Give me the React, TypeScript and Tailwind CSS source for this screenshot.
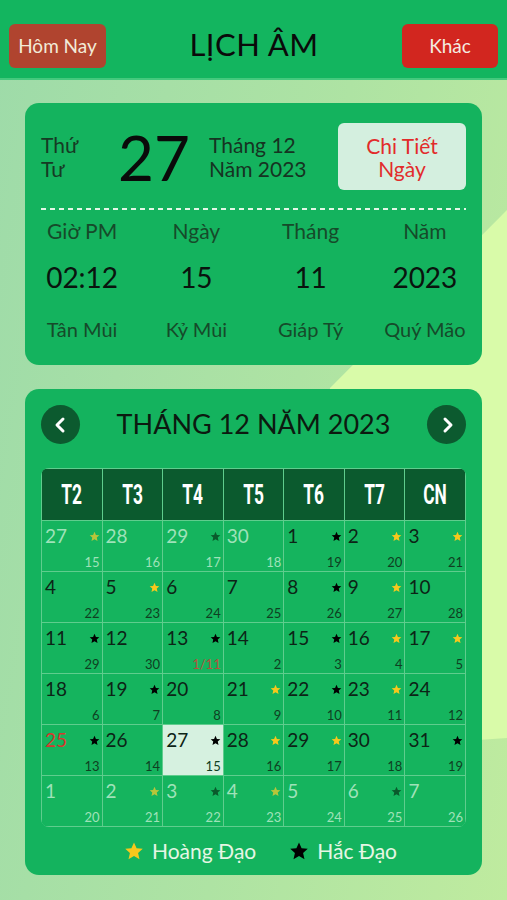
import React from 'react';
import { ChevronLeft, ChevronRight } from 'lucide-react';

type StarKind = 'y' | 'b' | null;

interface DayCell {
  day: number;
  lunar: string;
  star: StarKind;
  other?: boolean;
  red?: boolean;
  today?: boolean;
  lunarRed?: boolean;
}

const weekdays = ['T2', 'T3', 'T4', 'T5', 'T6', 'T7', 'CN'];

// tuần lịch tháng 12/2023
const weeks: DayCell[][] = [
  [
    { day: 27, lunar: '15', star: 'y', other: true },
    { day: 28, lunar: '16', star: null, other: true },
    { day: 29, lunar: '17', star: 'b', other: true },
    { day: 30, lunar: '18', star: null, other: true },
    { day: 1, lunar: '19', star: 'b' },
    { day: 2, lunar: '20', star: 'y' },
    { day: 3, lunar: '21', star: 'y' },
  ],
  [
    { day: 4, lunar: '22', star: null },
    { day: 5, lunar: '23', star: 'y' },
    { day: 6, lunar: '24', star: null },
    { day: 7, lunar: '25', star: null },
    { day: 8, lunar: '26', star: 'b' },
    { day: 9, lunar: '27', star: 'y' },
    { day: 10, lunar: '28', star: null },
  ],
  [
    { day: 11, lunar: '29', star: 'b' },
    { day: 12, lunar: '30', star: null },
    { day: 13, lunar: '1/11', star: 'b', lunarRed: true },
    { day: 14, lunar: '2', star: null },
    { day: 15, lunar: '3', star: 'b' },
    { day: 16, lunar: '4', star: 'y' },
    { day: 17, lunar: '5', star: 'y' },
  ],
  [
    { day: 18, lunar: '6', star: null },
    { day: 19, lunar: '7', star: 'b' },
    { day: 20, lunar: '8', star: null },
    { day: 21, lunar: '9', star: 'y' },
    { day: 22, lunar: '10', star: 'b' },
    { day: 23, lunar: '11', star: 'y' },
    { day: 24, lunar: '12', star: null },
  ],
  [
    { day: 25, lunar: '13', star: 'b', red: true },
    { day: 26, lunar: '14', star: null },
    { day: 27, lunar: '15', star: 'b', today: true },
    { day: 28, lunar: '16', star: 'y' },
    { day: 29, lunar: '17', star: 'y' },
    { day: 30, lunar: '18', star: null },
    { day: 31, lunar: '19', star: 'b' },
  ],
  [
    { day: 1, lunar: '20', star: null, other: true },
    { day: 2, lunar: '21', star: 'y', other: true },
    { day: 3, lunar: '22', star: 'b', other: true },
    { day: 4, lunar: '23', star: 'y', other: true },
    { day: 5, lunar: '24', star: null, other: true },
    { day: 6, lunar: '25', star: 'b', other: true },
    { day: 7, lunar: '26', star: null, other: true },
  ],
];

const StarIcon = ({ size, className }: { size: number; className?: string }) => (
  <svg width={size} height={size} viewBox="0 0 24 24" className={className}>
    <path
      d="M12 1.8l3.1 6.9 7.4.7-5.6 5 1.7 7.4L12 17.9l-6.6 3.9 1.7-7.4-5.6-5 7.4-.7z"
      fill="currentColor"
    />
  </svg>
);

const Cell = ({ cell }: { cell: DayCell }) => {
  let numColor = 'text-[#0c2416]';
  let lunarColor = 'text-[#0f3f22]';
  let starColor = cell.star === 'y' ? 'text-[#f7c81c]' : 'text-black';
  if (cell.other) {
    numColor = 'text-[#9fe2b9]';
    lunarColor = 'text-[#9fe2b9]';
    starColor = cell.star === 'y' ? 'text-[#b8c53a]' : 'text-[#0a5a2c]';
  }
  if (cell.red) numColor = 'text-[#d4382d]';
  if (cell.lunarRed) lunarColor = 'text-[#b5503c]';

  return (
    <div
      className={`h-[50px] flex flex-col justify-between pl-[3px] pr-[2px] pt-[5px] pb-[1px] ${
        cell.today ? 'bg-[#d6f1e0]' : 'bg-[#15b45e]'
      }`}
    >
      <div className="flex items-center justify-between">
        <span className={`text-[19px] leading-[20px] ${numColor}`}>{cell.day}</span>
        {cell.star && <StarIcon size={11} className={starColor} />}
      </div>
      <div className={`text-right text-[13px] leading-[16px] ${lunarColor}`}>{cell.lunar}</div>
    </div>
  );
};

const App: React.FC = () => {
  const info = [
    { label: 'Giờ PM', value: '02:12', canchi: 'Tân Mùi' },
    { label: 'Ngày', value: '15', canchi: 'Kỷ Mùi' },
    { label: 'Tháng', value: '11', canchi: 'Giáp Tý' },
    { label: 'Năm', value: '2023', canchi: 'Quý Mão' },
  ];

  return (
    <div className="relative min-h-[900px] w-full overflow-hidden font-['Lato','Noto_Sans',sans-serif] bg-[linear-gradient(100deg,#9edba9_0%,#aee3a3_55%,#bfeb9f_100%)]">
      {/* mảng sáng phía sau */}
      <div className="absolute inset-0 bg-[#d9fba9] [clip-path:polygon(507px_210px,330px_388px,330px_748px,420px_744px,507px_738px)]" />

      {/* Header */}
      <div className="relative h-[80px] bg-[#13b55f] border-b-2 border-[#45c97d] flex items-center justify-between px-[9px] pt-[14px]">
        <button className="w-[97px] h-[44px] rounded-md bg-[#b0442f] text-[#f2ead8] text-[19px]">
          Hôm Nay
        </button>
        <h1 className="text-[31px] text-[#0a0a0a] tracking-[0.5px] -mt-[3px]">LỊCH ÂM</h1>
        <button className="w-[96px] h-[44px] rounded-md bg-[#d2261f] text-[#f4ece0] text-[19px]">
          Khác
        </button>
      </div>

      <div className="relative px-[25px] pt-[23px] flex flex-col gap-[24px]">
        {/* Thông tin ngày */}
        <div className="h-[262px] rounded-[14px] bg-[#14b35e] pt-[20px] flex flex-col">
          <div className="flex items-center px-[16px] h-[67px]">
            <div className="w-[77px] text-[21px] leading-[24px] text-[#163a24]">
              <div>Thứ</div>
              <div>Tư</div>
            </div>
            <div className="w-[91px] text-[62px] leading-[62px] text-[#0a0a0a]">27</div>
            <div className="flex-1 text-[21px] leading-[24px] text-[#163322]">
              <div>Tháng 12</div>
              <div>Năm 2023</div>
            </div>
            <button className="w-[128px] h-[67px] rounded-md bg-[#d4efdf] text-[#e22b2b] text-[21px] leading-[23px]">
              Chi Tiết
              <br />
              Ngày
            </button>
          </div>

          <div className="mx-[16px] mt-[18px] h-[2px] bg-[repeating-linear-gradient(90deg,#e3f6e6_0px,#e3f6e6_5px,transparent_5px,transparent_9px)]" />

          <div className="grid grid-cols-4 mt-[9px]">
            {info.map(item => (
              <div key={item.label} className="flex flex-col items-center">
                <div className="text-[21px] leading-[24px] text-[#164a2a]">{item.label}</div>
                <div className="mt-[16px] text-[28px] leading-[36px] text-[#0a140e]">{item.value}</div>
                <div className="mt-[22px] text-[20px] leading-[24px] text-[#164a2a]">{item.canchi}</div>
              </div>
            ))}
          </div>
        </div>

        {/* Lịch tháng */}
        <div className="h-[486px] rounded-[14px] bg-[#14b35e] px-[16px] pt-[16px]">
          <div className="flex items-center justify-between h-[39px]">
            <button className="w-[39px] h-[39px] rounded-full bg-[#0c5a2f] flex items-center justify-center">
              <ChevronLeft size={24} strokeWidth={3} className="text-white -ml-[2px]" />
            </button>
            <div className="text-[27px] text-[#0c1a10]">THÁNG 12 NĂM 2023</div>
            <button className="w-[39px] h-[39px] rounded-full bg-[#0c5a2f] flex items-center justify-center">
              <ChevronRight size={24} strokeWidth={3} className="text-white ml-[2px]" />
            </button>
          </div>

          <div className="mt-[24px] grid grid-cols-7 gap-px p-px bg-[#5fcd8d] rounded-[8px] overflow-hidden">
            {weekdays.map(w => (
              <div key={w} className="h-[51px] bg-[#0b5a2e] flex items-center justify-center">
                <span className="inline-block scale-x-[0.62] font-['Roboto',sans-serif] font-bold text-[28px] text-white">
                  {w}
                </span>
              </div>
            ))}
            {weeks.map((week, wi) =>
              week.map((cell, ci) => <Cell key={`${wi}-${ci}`} cell={cell} />)
            )}
          </div>

          <div className="flex items-center justify-center gap-[33px] pl-[14px] mt-[12px]">
            <div className="flex items-center gap-[8px]">
              <StarIcon size={20} className="text-[#f7c81c]" />
              <span className="text-[21px] leading-[24px] text-[#e6f6e4]">Hoàng Đạo</span>
            </div>
            <div className="flex items-center gap-[8px]">
              <StarIcon size={20} className="text-black" />
              <span className="text-[21px] leading-[24px] text-[#e6f6e4]">Hắc Đạo</span>
            </div>
          </div>
        </div>
      </div>
    </div>
  );
};

export default App;
